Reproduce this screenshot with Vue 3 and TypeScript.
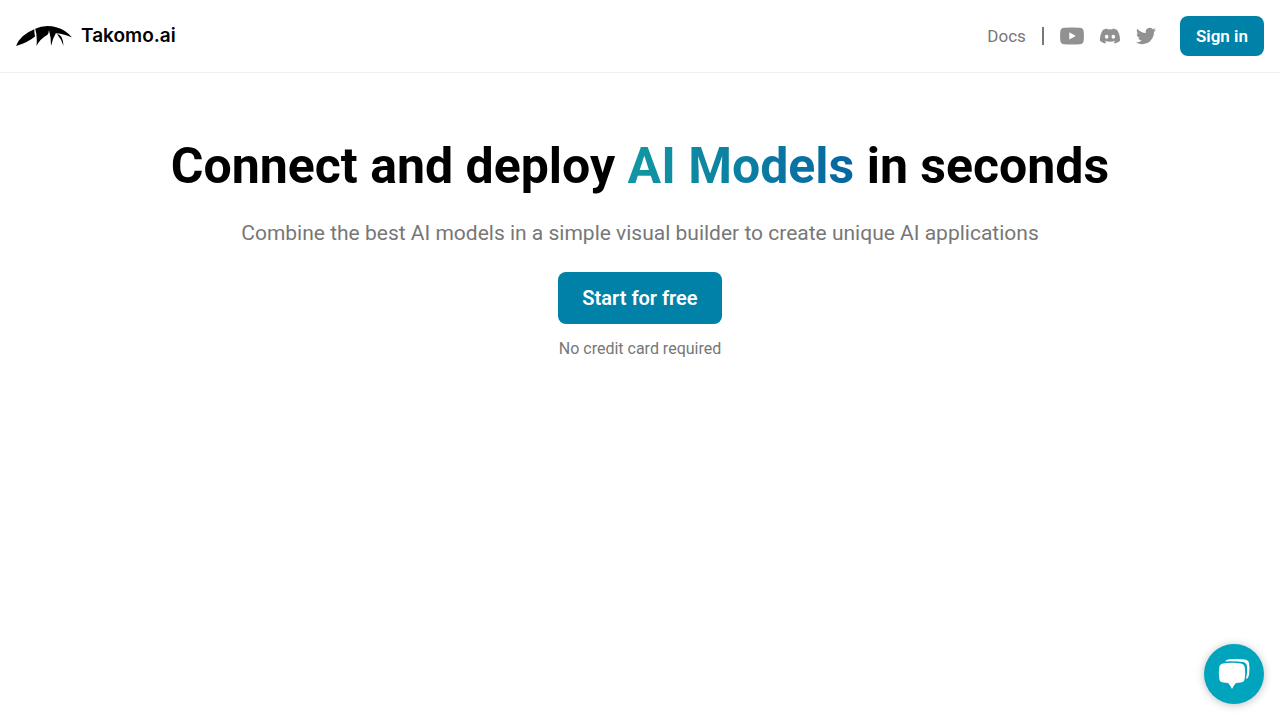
<script setup lang="ts">
interface SocialLink {
  name: string
  width: number
  height: number
  viewBox: string
  path: string
}

const headline = {
  before: 'Connect and deploy',
  accent: 'AI Models',
  after: 'in seconds',
}

const socials: SocialLink[] = [
  {
    name: 'YouTube',
    width: 24,
    height: 18,
    viewBox: '0 0 24 18',
    path: 'M4 .8Q12 0 20 .8Q23.2 1.1 23.6 4Q24.2 9 23.6 14Q23.2 16.9 20 17.2Q12 18 4 17.2Q.8 16.9.4 14Q-.2 9 .4 4Q.8 1.1 4 .8ZM9.3 5.2V12.6L15.8 8.9Z',
  },
  {
    name: 'Discord',
    width: 20,
    height: 20,
    viewBox: '0 0 24 24',
    path: 'M20.317 4.37a19.79 19.79 0 0 0-4.885-1.515.074.074 0 0 0-.079.037c-.21.375-.444.864-.608 1.25a18.27 18.27 0 0 0-5.487 0 12.64 12.64 0 0 0-.617-1.25.077.077 0 0 0-.079-.037A19.736 19.736 0 0 0 3.677 4.37a.07.07 0 0 0-.032.027C.533 9.046-.32 13.58.099 18.057a.082.082 0 0 0 .031.057 19.9 19.9 0 0 0 5.993 3.03.078.078 0 0 0 .084-.028c.462-.63.874-1.295 1.226-1.994a.076.076 0 0 0-.041-.106 13.107 13.107 0 0 1-1.872-.892.077.077 0 0 1-.008-.128c.126-.094.252-.192.372-.292a.074.074 0 0 1 .077-.01c3.928 1.793 8.18 1.793 12.062 0a.074.074 0 0 1 .078.01c.12.098.246.198.373.292a.077.077 0 0 1-.006.127 12.3 12.3 0 0 1-1.873.892.077.077 0 0 0-.041.107c.36.698.772 1.362 1.225 1.993a.076.076 0 0 0 .084.028 19.839 19.839 0 0 0 6.002-3.03.077.077 0 0 0 .032-.054c.5-5.177-.838-9.674-3.549-13.66a.061.061 0 0 0-.031-.03zM8.02 15.33c-1.183 0-2.157-1.085-2.157-2.419 0-1.333.956-2.419 2.157-2.419 1.21 0 2.176 1.096 2.157 2.42 0 1.333-.956 2.418-2.157 2.418zm7.975 0c-1.183 0-2.157-1.085-2.157-2.419 0-1.333.955-2.419 2.157-2.419 1.21 0 2.176 1.096 2.157 2.42 0 1.333-.946 2.418-2.157 2.418z',
  },
  {
    name: 'Twitter',
    width: 20,
    height: 20,
    viewBox: '0 0 24 24',
    path: 'M23.953 4.57a10 10 0 0 1-2.825.775 4.958 4.958 0 0 0 2.163-2.723c-.951.555-2.005.959-3.127 1.184a4.92 4.92 0 0 0-8.384 4.482C7.69 8.095 4.067 6.13 1.64 3.162a4.822 4.822 0 0 0-.666 2.475c0 1.71.87 3.213 2.188 4.096a4.904 4.904 0 0 1-2.228-.616v.06a4.923 4.923 0 0 0 3.946 4.827 4.996 4.996 0 0 1-2.212.085 4.936 4.936 0 0 0 4.604 3.417 9.867 9.867 0 0 1-6.102 2.105c-.39 0-.779-.023-1.17-.067a13.995 13.995 0 0 0 7.557 2.209c9.053 0 13.998-7.496 13.998-13.985 0-.21 0-.42-.015-.63A9.935 9.935 0 0 0 24 4.59z',
  },
]
</script>

<template>
  <div class="page">
    <header class="topbar">
      <a class="brand" href="#">
        <svg width="56" height="20" viewBox="0 0 56 20" aria-hidden="true">
          <path d="M0 20Q4 9 18.300 3.300Q18.200 7 19 10.500Q12 16.500 0 20Z" />
          <path d="M19.200 2.800Q29-1.800 41 1.500Q50 4 56 11.500Q49 8 39.800 7.300Q37 12 35 20Q35 11 33 4Q32.800 7 31.500 8.800Q24 13 20.500 20Q21.500 10 19.200 2.800Z" />
          <path d="M41 8Q44 8.300 45.500 11Q47.500 15 47.500 20Q46 14 41 8Z" />
        </svg>
        <span>Takomo.ai</span>
      </a>
      <nav class="nav" aria-label="Main">
        <a class="docs" href="#">Docs</a>
        <span class="divider" aria-hidden="true"></span>
        <a v-for="s in socials" :key="s.name" class="social" href="#" :aria-label="s.name">
          <svg :width="s.width" :height="s.height" :viewBox="s.viewBox" aria-hidden="true">
            <path :d="s.path" fill-rule="evenodd" />
          </svg>
        </a>
        <button class="button sign-in" type="button">Sign in</button>
      </nav>
    </header>

    <main class="hero">
      <h1>{{ headline.before }} <span class="accent">{{ headline.accent }}</span> {{ headline.after }}</h1>
      <p class="lead">Combine the best AI models in a simple visual builder to create unique AI applications</p>
      <button class="button start" type="button">Start for free</button>
      <p class="note">No credit card required</p>
    </main>

    <button class="chat" type="button" aria-label="Open chat">
      <svg width="32" height="32" viewBox="0 0 32 32" aria-hidden="true">
        <path d="M7 3.500Q8 1.500 12 1.200Q19 .5 27 1.500Q30.500 2 31 5Q32 11 31 17Q30.500 20 28 21Q29.500 15 29 8.500Q28.500 4.500 25 4Q16 3 7 3.500Z" />
        <path d="M5 5.500Q14 4 23 5.500Q26.200 6 26.700 9Q27.700 15 26.700 21Q26.200 24 23 24.500L18 25Q16 27 14 31Q12 27 10 25L5 24.500Q1.800 24 1.300 21Q.3 15 1.300 9Q1.800 6 5 5.500Z" />
      </svg>
    </button>
  </div>
</template>

<style>
body {
  margin: 0;
  background: #fff;
}
</style>

<style scoped>
.page {
  font-family: Roboto, "Liberation Sans", sans-serif;
  color: #000;
}
.topbar {
  display: flex;
  align-items: center;
  justify-content: space-between;
  padding: 16px;
  border-bottom: 1px solid #f0f0f0;
}
.brand {
  display: flex;
  align-items: center;
  gap: 9px;
  color: #000;
  font: 600 19px/24px Inter, sans-serif;
  text-decoration: none;
}
.nav {
  display: flex;
  align-items: center;
  gap: 16px;
}
.docs {
  color: #777;
  font-size: 17px;
  line-height: 24px;
  text-decoration: none;
}
.divider {
  width: 2px;
  height: 18px;
  background: #777;
}
.social {
  display: flex;
}
.social svg {
  fill: #919191;
}
.button {
  border: 0;
  border-radius: 8px;
  background: #0081a7;
  color: #fff;
  font-family: inherit;
  font-weight: 600;
  cursor: pointer;
}
.sign-in {
  margin-left: 8px;
  padding: 8px 16px;
  font-size: 17px;
  line-height: 24px;
}
.hero {
  display: flex;
  flex-direction: column;
  align-items: center;
  padding: 63px 16px;
  text-align: center;
}
h1 {
  margin: 0;
  font-size: 50px;
  font-weight: 700;
  line-height: 60px;
}
.accent {
  background: linear-gradient(to right, #1297a3, #0567a1);
  background-clip: text;
  -webkit-background-clip: text;
  color: transparent;
}
.lead {
  margin: 21px 0 23px;
  color: #777;
  font-size: 21px;
  line-height: 32px;
}
.start {
  padding: 12px 24px;
  font-size: 20px;
  line-height: 28px;
}
.note {
  margin: 15px 0 0;
  color: #777;
  font-size: 16px;
  line-height: 20px;
}
.chat {
  position: fixed;
  right: 16px;
  bottom: 16px;
  display: grid;
  place-items: center;
  width: 60px;
  height: 60px;
  padding: 0;
  border: 0;
  border-radius: 50%;
  background: #00a5bd;
  box-shadow: 0 1px 8px rgba(0, 0, 0, 0.25);
  cursor: pointer;
}
.chat svg {
  fill: #fff;
}
</style>
